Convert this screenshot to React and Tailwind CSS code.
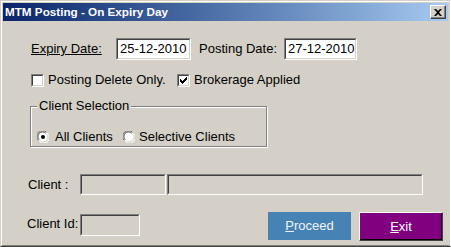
import React from 'react';

const font = { fontFamily: '"Liberation Sans", Arial, sans-serif' };

const Sunken = ({ className = '', fill = 'bg-white', children }) => (
  <div className={`border border-t-[#808080] border-l-[#808080] border-b-white border-r-white ${className}`}>
    <div className={`w-full h-full border border-t-[#404040] border-l-[#404040] border-b-[#d4d0c8] border-r-[#d4d0c8] ${fill} flex items-center pl-[2px] text-[13px] text-black`}>
      {children}
    </div>
  </div>
);

const CheckBox = ({ checked }) => (
  <Sunken className="w-[13px] h-[13px] shrink-0">
    {checked && (
      <svg width="7" height="7" viewBox="0 0 7 7" className="-ml-[1px]">
        <path d="M0 2h1v1h1v1h1V3h1V2h1V1h1V0h1v3H6v1H5v1H4v1H3v1H2V6H1V5H0z" fill="#000" />
      </svg>
    )}
  </Sunken>
);

const Radio = ({ checked }) => (
  <svg width="12" height="12" viewBox="0 0 12 12" className="shrink-0">
    <circle cx="6" cy="6" r="5.5" fill="#fff" />
    <path d="M1.2 9.5A5.5 5.5 0 0 1 9.5 1.2" stroke="#808080" strokeWidth="1" fill="none" />
    <path d="M2.2 8.8A4.3 4.3 0 0 1 8.8 2.2" stroke="#404040" strokeWidth="1" fill="none" />
    <path d="M10.6 2.6A5.5 5.5 0 0 1 2.6 10.6" stroke="#fff" strokeWidth="1" fill="none" />
    <path d="M9.6 3.2A4.3 4.3 0 0 1 3.2 9.6" stroke="#d4d0c8" strokeWidth="1" fill="none" />
    {checked && <circle cx="6" cy="6" r="2" fill="#000" />}
  </svg>
);

const App = () => {
  return (
    <div className="w-[451px] h-[247px] overflow-hidden bg-[#d4d0c8] text-[13px] text-black" style={font}>
      <div className="w-full h-full border border-t-[#d4d0c8] border-l-[#d4d0c8] border-r-white border-b-[#404040]">
        <div className="w-full h-full border border-t-white border-l-white border-r-[#d4d0c8] border-b-[#808080] p-[1px]">
          {/* title bar */}
          <div className="h-[18px] flex items-center justify-between bg-gradient-to-r from-[#0a246a] to-[#a6caf0] pl-[2px] pr-[2px]">
            <span className="text-white font-bold text-[11.7px] leading-none">MTM Posting - On Expiry Day</span>
            <div className="w-[16px] h-[14px] bg-[#d4d0c8] border border-t-white border-l-white border-b-[#404040] border-r-[#404040] shadow-[inset_-1px_-1px_0_#808080] flex items-center justify-center">
              <svg width="8" height="7" viewBox="0 0 8 7">
                <path d="M0 0h2l2 2 2-2h2L5 3.5 8 7H6L4 5 2 7H0l3-3.5z" fill="#000" />
              </svg>
            </div>
          </div>

          {/* dates */}
          <div className="mt-[17px] pl-[28px] flex items-center h-[22px]">
            <span className="w-[85px] underline">Expiry Date:</span>
            <Sunken className="w-[75px] h-[22px]">25-12-2010</Sunken>
            <span className="ml-[8px] w-[85px]">Posting Date:</span>
            <Sunken className="w-[73px] h-[22px]">27-12-2010</Sunken>
          </div>

          {/* options */}
          <div className="mt-[12px] pl-[28px] flex items-center h-[16px]">
            <CheckBox />
            <span className="ml-[4px] w-[129px]">Posting Delete Only.</span>
            <CheckBox checked />
            <span className="ml-[4px]">Brokerage Applied</span>
          </div>

          {/* client selection */}
          <div className="relative mt-[18px] ml-[27px] w-[237px] h-[41px] border border-[#808080] shadow-[inset_1px_1px_0_#fff,1px_1px_0_#fff]">
            <span className="absolute left-[6px] -top-[9px] px-[2px] bg-[#d4d0c8] leading-[16px]">Client Selection</span>
            <div className="pt-[23px] pl-[6px] flex items-center">
              <Radio checked />
              <span className="ml-[6px] w-[68px] leading-[13px]">All Clients</span>
              <Radio />
              <span className="ml-[4px] leading-[13px]">Selective Clients</span>
            </div>
          </div>

          {/* client */}
          <div className="mt-[27px] pl-[25px] flex items-center h-[21px]">
            <span className="w-[52px]">Client :</span>
            <Sunken className="w-[86px] h-[21px]" fill="bg-[#d4d0c8]" />
            <Sunken className="ml-[1px] w-[256px] h-[21px]" fill="bg-[#d4d0c8]" />
          </div>

          {/* client id + buttons */}
          <div className="mt-[17px] pl-[24px] flex items-start">
            <div className="mt-[2px] flex items-center h-[22px]">
              <span className="w-[53px] -mt-[3px]">Client Id:</span>
              <Sunken className="w-[60px] h-[22px]" fill="bg-[#d4d0c8]" />
            </div>
            <button className="ml-[128px] w-[83px] h-[28px] bg-[#4682b4] text-[#f0f4f8] text-[13px] flex items-center justify-center">
              <span><span className="underline">P</span>roceed</span>
            </button>
            <button className="ml-[8px] w-[84px] h-[29px] bg-[#800080] text-white text-[13px] border border-t-white border-l-white border-b-[#404040] border-r-[#404040] shadow-[inset_-1px_-1px_0_#000] flex items-center justify-center">
              <span><span className="underline">E</span>xit</span>
            </button>
          </div>
        </div>
      </div>
    </div>
  );
};

export default App;
